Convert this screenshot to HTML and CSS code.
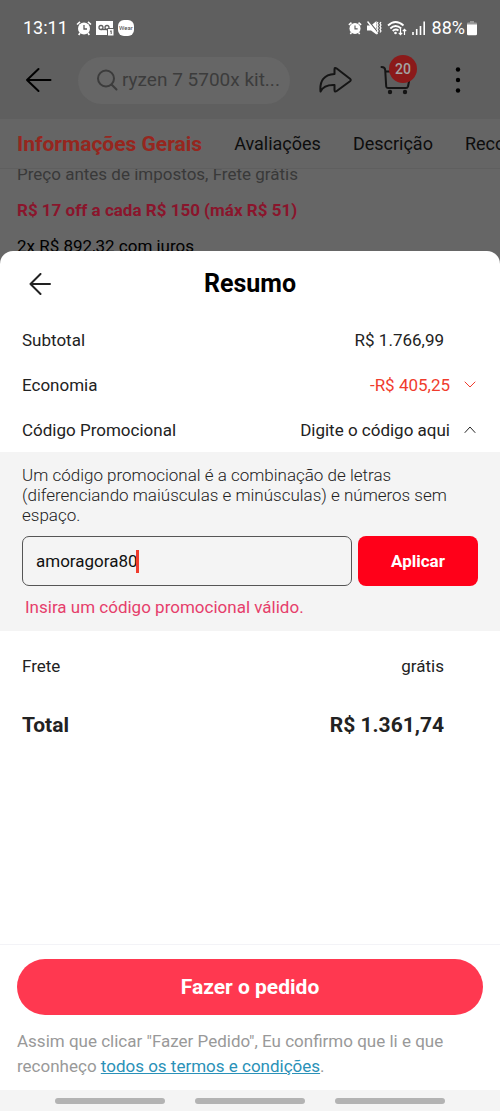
FILE: index.html
```html
<!DOCTYPE html>
<html lang="pt-BR">
<head>
<meta charset="utf-8">
<meta name="viewport" content="width=device-width, initial-scale=1">
<title>Resumo</title>
<link rel="stylesheet" href="styles.css">
</head>
<body>
<div class="screen">
  <header class="top">
    <div class="status">
      <div class="status-left">
        <span class="clock">13:11</span>
        <svg width="16" height="16" viewBox="0 0 16 16" aria-hidden="true">
          <path d="M1 4.500 4 1.800M15 4.500 12 1.800M4 13l-1.300 2M12 13l1.300 2" stroke="#fff" stroke-width="1.600" fill="none"/>
          <circle cx="8" cy="8.500" r="6" fill="#fff"/>
          <path d="M8 5v4h3" stroke="#5f5f5f" stroke-width="1.300" fill="none"/>
        </svg>
        <svg width="18" height="16" viewBox="0 0 18 16" aria-hidden="true">
          <path d="M0 1h17v14H0z" fill="#fff"/>
          <circle cx="5" cy="7.500" r="2" stroke="#5f5f5f" stroke-width="1.300" fill="none"/>
          <circle cx="11" cy="7.500" r="2" stroke="#5f5f5f" stroke-width="1.300" fill="none"/>
          <path d="M5 9.500h6" stroke="#5f5f5f" stroke-width="1.300"/>
          <path d="M11.500 8.500H18V16h-6.500z" fill="#fff" stroke="#5f5f5f"/>
          <path d="M14 11.500l1.200-.8V14" stroke="#5f5f5f" fill="none"/>
        </svg>
        <span class="wear">Wear</span>
      </div>
      <div class="status-right">
        <svg width="14" height="16" viewBox="0 0 16 16" aria-hidden="true">
          <path d="M1 4.500 4 1.800M15 4.500 12 1.800M4 13l-1.300 2M12 13l1.300 2" stroke="#fff" stroke-width="1.800" fill="none"/>
          <circle cx="8" cy="8.500" r="6.300" fill="#fff"/>
          <path d="M8 5v4h3" stroke="#5f5f5f" stroke-width="1.300" fill="none"/>
        </svg>
        <svg width="15" height="16" viewBox="0 0 15 16" aria-hidden="true">
          <path d="M0 5.500h4L9.500 1v13.500L4 10.500H0z" fill="#fff"/>
          <path d="M1.500 1 11 12.500" stroke="#5f5f5f" stroke-width="1.200"/>
          <path d="M.5 1.500 10.500 14" stroke="#fff" stroke-width="1.500"/>
          <path d="M11 2l-1 1.500 1 1.500-1 1.500 1 1.500-1 1.500 1 1.500-1 1.500M14 2l-1 1.500 1 1.500-1 1.500 1 1.500-1 1.500 1 1.500-1 1.500" stroke="#fff" stroke-width="1.200" fill="none"/>
        </svg>
        <svg width="20" height="16" viewBox="0 0 20 16" aria-hidden="true">
          <path d="M1 5.500Q8.500-1.500 16.500 5.500M3.300 8.500Q8.500 3.500 14.200 8.500M5.700 11Q8.500 8.300 11.500 10.500" stroke="#fff" stroke-width="1.800" fill="none"/>
          <circle cx="8.500" cy="13" r="1.300" fill="#fff"/>
          <path d="M13.500 9v5.500M11.800 12.800l1.700 1.900 1.700-1.900M17.500 15V9.500M15.800 11.200l1.700-1.900 1.700 1.900" stroke="#fff" stroke-width="1.200" fill="none"/>
        </svg>
        <svg width="14" height="16" viewBox="0 0 14 16" aria-hidden="true">
          <path d="M1 12v3M4.700 9v6M8.500 6v9M12.200 1.500V15" stroke="#fff" stroke-width="1.600"/>
        </svg>
        <span class="percent">88%</span>
        <svg class="battery" width="10" height="16" viewBox="0 0 10 16" aria-hidden="true">
          <path d="M3 1h4v1.500h2q1 0 1 1V5H0V3.500q0-1 1-1h2z" fill="#999"/>
          <path d="M0 4.500h10V14q0 1.300-1.300 1.300H1.300Q0 15.300 0 14z" fill="#fff"/>
        </svg>
      </div>
    </div>
    <div class="toolbar">
      <button class="icon-btn" aria-label="Voltar">
        <svg width="27" height="26" viewBox="0 0 27 26"><path d="M13.500 2 2 13l11.500 11M2 13h23.500" class="line dark"/></svg>
      </button>
      <label class="search">
        <svg width="22" height="22" viewBox="0 0 22 22" aria-hidden="true"><circle cx="10" cy="9.500" r="8" class="line grey"/><path d="m15.500 15.500 5 5" class="line grey"/></svg>
        <input class="search-input" type="text" value="ryzen 7 5700x kit..." aria-label="Buscar">
      </label>
      <button class="icon-btn share" aria-label="Compartilhar">
        <svg width="34" height="28" viewBox="0 0 34 28"><path d="M15.500 8V3.500Q15.500 1 17.700 2.500L31 12.700q1.500 1.300 0 2.600L17.700 25q-2.200 1.500-2.200-1V19Q5 18.500 1.500 25.500 0 9 15.500 8z" class="line ink"/></svg>
      </button>
      <button class="icon-btn cart" aria-label="Carrinho">
        <svg width="34" height="30" viewBox="0 0 34 30"><path d="M1.500 2Q5 2 5.200 5l1 16.500Q6.300 23 8 23h18q1.500 0 2-1.500L31 6.500H5.500" class="line ink"/><circle cx="10" cy="27" r="2.200" fill="#151515"/><circle cx="25" cy="27" r="2.200" fill="#151515"/></svg>
        <span class="badge">20</span>
      </button>
      <button class="icon-btn" aria-label="Mais opções">
        <svg width="6" height="26" viewBox="0 0 6 26"><circle cx="3" cy="2.500" r="2.200"/><circle cx="3" cy="13" r="2.200"/><circle cx="3" cy="23.500" r="2.200"/></svg>
      </button>
    </div>
  </header>
  <nav class="tabs">
    <a class="tab active" href="#geral">Informações Gerais</a>
    <a class="tab" href="#avaliacoes">Avaliações</a>
    <a class="tab" href="#descricao">Descrição</a>
    <a class="tab" href="#recomendados">Recomendados</a>
  </nav>
  <section class="product">
    <p class="tax">Preço antes de impostos, Frete grátis</p>
    <p class="offer">R$ 17 off a cada R$ 150 (máx R$ 51)</p>
    <p class="installments">2x R$ 892,32 com juros</p>
  </section>

  <main class="sheet">
    <div class="sheet-head">
      <button class="icon-btn" aria-label="Voltar">
        <svg width="22" height="22" viewBox="0 0 22 22"><path d="M11.500 1 1.500 11l10 10M1.500 11H21" class="line thin"/></svg>
      </button>
      <h1 class="title">Resumo</h1>
    </div>
    <div class="row"><span>Subtotal</span><span class="value">R$ 1.766,99</span></div>
    <div class="row"><span>Economia</span>
      <button class="expand saving">-R$ 405,25
        <svg width="12" height="8" viewBox="0 0 12 8" aria-hidden="true"><path d="m1 1 5 5 5-5" class="chevron"/></svg>
      </button>
    </div>
    <div class="row"><span>Código Promocional</span>
      <button class="expand">Digite o código aqui
        <svg width="12" height="8" viewBox="0 0 12 8" aria-hidden="true"><path d="m1 6.500 5-5.500 5 5.500" class="chevron"/></svg>
      </button>
    </div>
    <form class="promo">
      <label class="hint" for="code">Um código promocional é a combinação de letras (diferenciando maiúsculas e minúsculas) e números sem espaço.</label>
      <div class="fields">
        <div class="field"><input class="code" id="code" type="text" value="amoragora80"><span class="caret"></span></div>
        <button class="apply" type="button">Aplicar</button>
      </div>
      <p class="error">Insira um código promocional válido.</p>
    </form>
    <div class="row shipping"><span>Frete</span><span class="value">grátis</span></div>
    <div class="row total"><span>Total</span><span class="value">R$ 1.361,74</span></div>
    <footer class="checkout">
      <button class="order">Fazer o pedido</button>
      <p class="terms">Assim que clicar "Fazer Pedido", Eu confirmo que li e que reconheço <a class="link" href="#termos">todos os termos e condições</a>.</p>
    </footer>
    <div class="system-nav"><span class="bar"></span><span class="bar"></span><span class="bar"></span></div>
  </main>
</div>
</body>
</html>
```
FILE: styles.css
```css
* { box-sizing: border-box; }
body { margin: 0; font-family: Roboto, sans-serif; font-size: 17px; line-height: 20px; color: #222; }
p, h1 { margin: 0; }
button, input { font: inherit; color: inherit; border: 0; background: none; padding: 0; }
button { cursor: pointer; }
svg { display: block; flex: none; }

.screen { min-height: 100vh; display: flex; flex-direction: column; background: #666; overflow: hidden; }
.line { fill: none; stroke-width: 2; stroke-linecap: round; stroke-linejoin: round; }
.dark { stroke: #000; }
.ink { stroke: #151515; }
.grey { stroke: #3c3c3c; }
.thin { stroke: #222; }

.top { background: #5f5f5f; padding-bottom: 15px; }
.status { height: 56px; padding: 0 23px; display: flex; align-items: center; justify-content: space-between; color: #fff; font-size: 18px; }
.status-left { display: flex; align-items: center; gap: 4px; }
.status-right { display: flex; align-items: center; gap: 5px; }
.clock { margin-right: 4px; }
.percent { margin-left: 1px; }
.battery { margin-left: -3px; }
.wear { width: 16px; height: 16px; border-radius: 6px; background: #fff; color: #444; font-size: 6px; line-height: 16px; text-align: center; }

.toolbar { display: flex; align-items: center; height: 48px; padding: 0 39px 0 25px; }
.icon-btn { position: relative; flex: none; }
.search { flex: 1; min-width: 0; height: 47px; margin: 0 29px 0 26px; padding: 0 6px 0 18px; border-radius: 24px; background: #666; display: flex; align-items: center; gap: 4px; }
.search-input { flex: 1; min-width: 0; width: 100%; font-size: 19px; color: #3c3c3c; }
.cart { margin: 0 41px 0 27px; }
.badge { position: absolute; left: 9px; top: -10px; width: 28px; height: 28px; border-radius: 50%; background: #8b1a1a; color: #a3a3a3; font-size: 14px; font-weight: 500; line-height: 28px; text-align: center; }

.tabs { display: flex; align-items: center; gap: 32px; height: 50px; padding-left: 17px; background: #656565; border-bottom: 1px solid #5f5f5f; overflow: hidden; white-space: nowrap; }
.tab { color: #0d0d0d; font-size: 18px; line-height: 24px; text-decoration: none; }
.active { color: #96261e; font-size: 21px; font-weight: 700; }

.product { height: 82px; padding-left: 17px; overflow: hidden; display: flex; flex-direction: column; gap: 16px; white-space: nowrap; }
.tax { margin-top: -5px; color: #393939; }
.offer { color: #8a152c; font-weight: 700; }
.installments { color: #000; }

.sheet { flex: 1; display: flex; flex-direction: column; background: #fff; border-radius: 13px 13px 0 0; }
.sheet-head { height: 66px; padding: 0 29px; display: grid; grid-template-columns: 22px 1fr 22px; align-items: center; }
.title { text-align: center; font-size: 25px; line-height: 32px; font-weight: 700; color: #000; }
.row { display: flex; align-items: center; justify-content: space-between; height: 45px; padding: 0 24px 0 22px; }
.value { margin-right: 32px; }
.expand { display: flex; align-items: center; gap: 14px; }
.saving { color: #f03c2d; }
.chevron { fill: none; stroke: currentColor; stroke-width: 1; stroke-linecap: round; }

.promo { background: #f4f4f4; padding: 13px 22px 14px; }
.hint { display: block; font-weight: 300; }
.fields { display: flex; gap: 6px; margin-top: 11px; }
.field { position: relative; flex: 1; min-width: 0; }
.code { width: 100%; height: 50px; padding: 0 13px; border: 1px solid #555; border-radius: 7px; color: #111; }
.caret { position: absolute; left: 114px; top: 14px; width: 3px; height: 23px; background: #f03c2d; }
.apply { flex: none; width: 120px; height: 50px; border-radius: 8px; background: #ff0019; color: #fff; font-weight: 700; }
.error { margin: 11px 3px 0; color: #e63e6b; }
.shipping { height: 70px; }
.total { height: 48px; font-size: 21px; font-weight: 700; }

.checkout { margin-top: auto; border-top: 1px solid #f3f3f7; padding: 14px 17px 11px; }
.order { width: 100%; height: 56px; border-radius: 28px; background: #ff3850; color: #fff; font-size: 21px; font-weight: 700; }
.terms { margin-top: 14px; line-height: 25px; color: #999; }
.link { color: #2a91b8; }
.system-nav { height: 21px; background: #f4f4f4; display: flex; align-items: center; justify-content: center; gap: 30px; }
.bar { width: 110px; height: 6px; border-radius: 3px; background: #b3b3b3; }
```
